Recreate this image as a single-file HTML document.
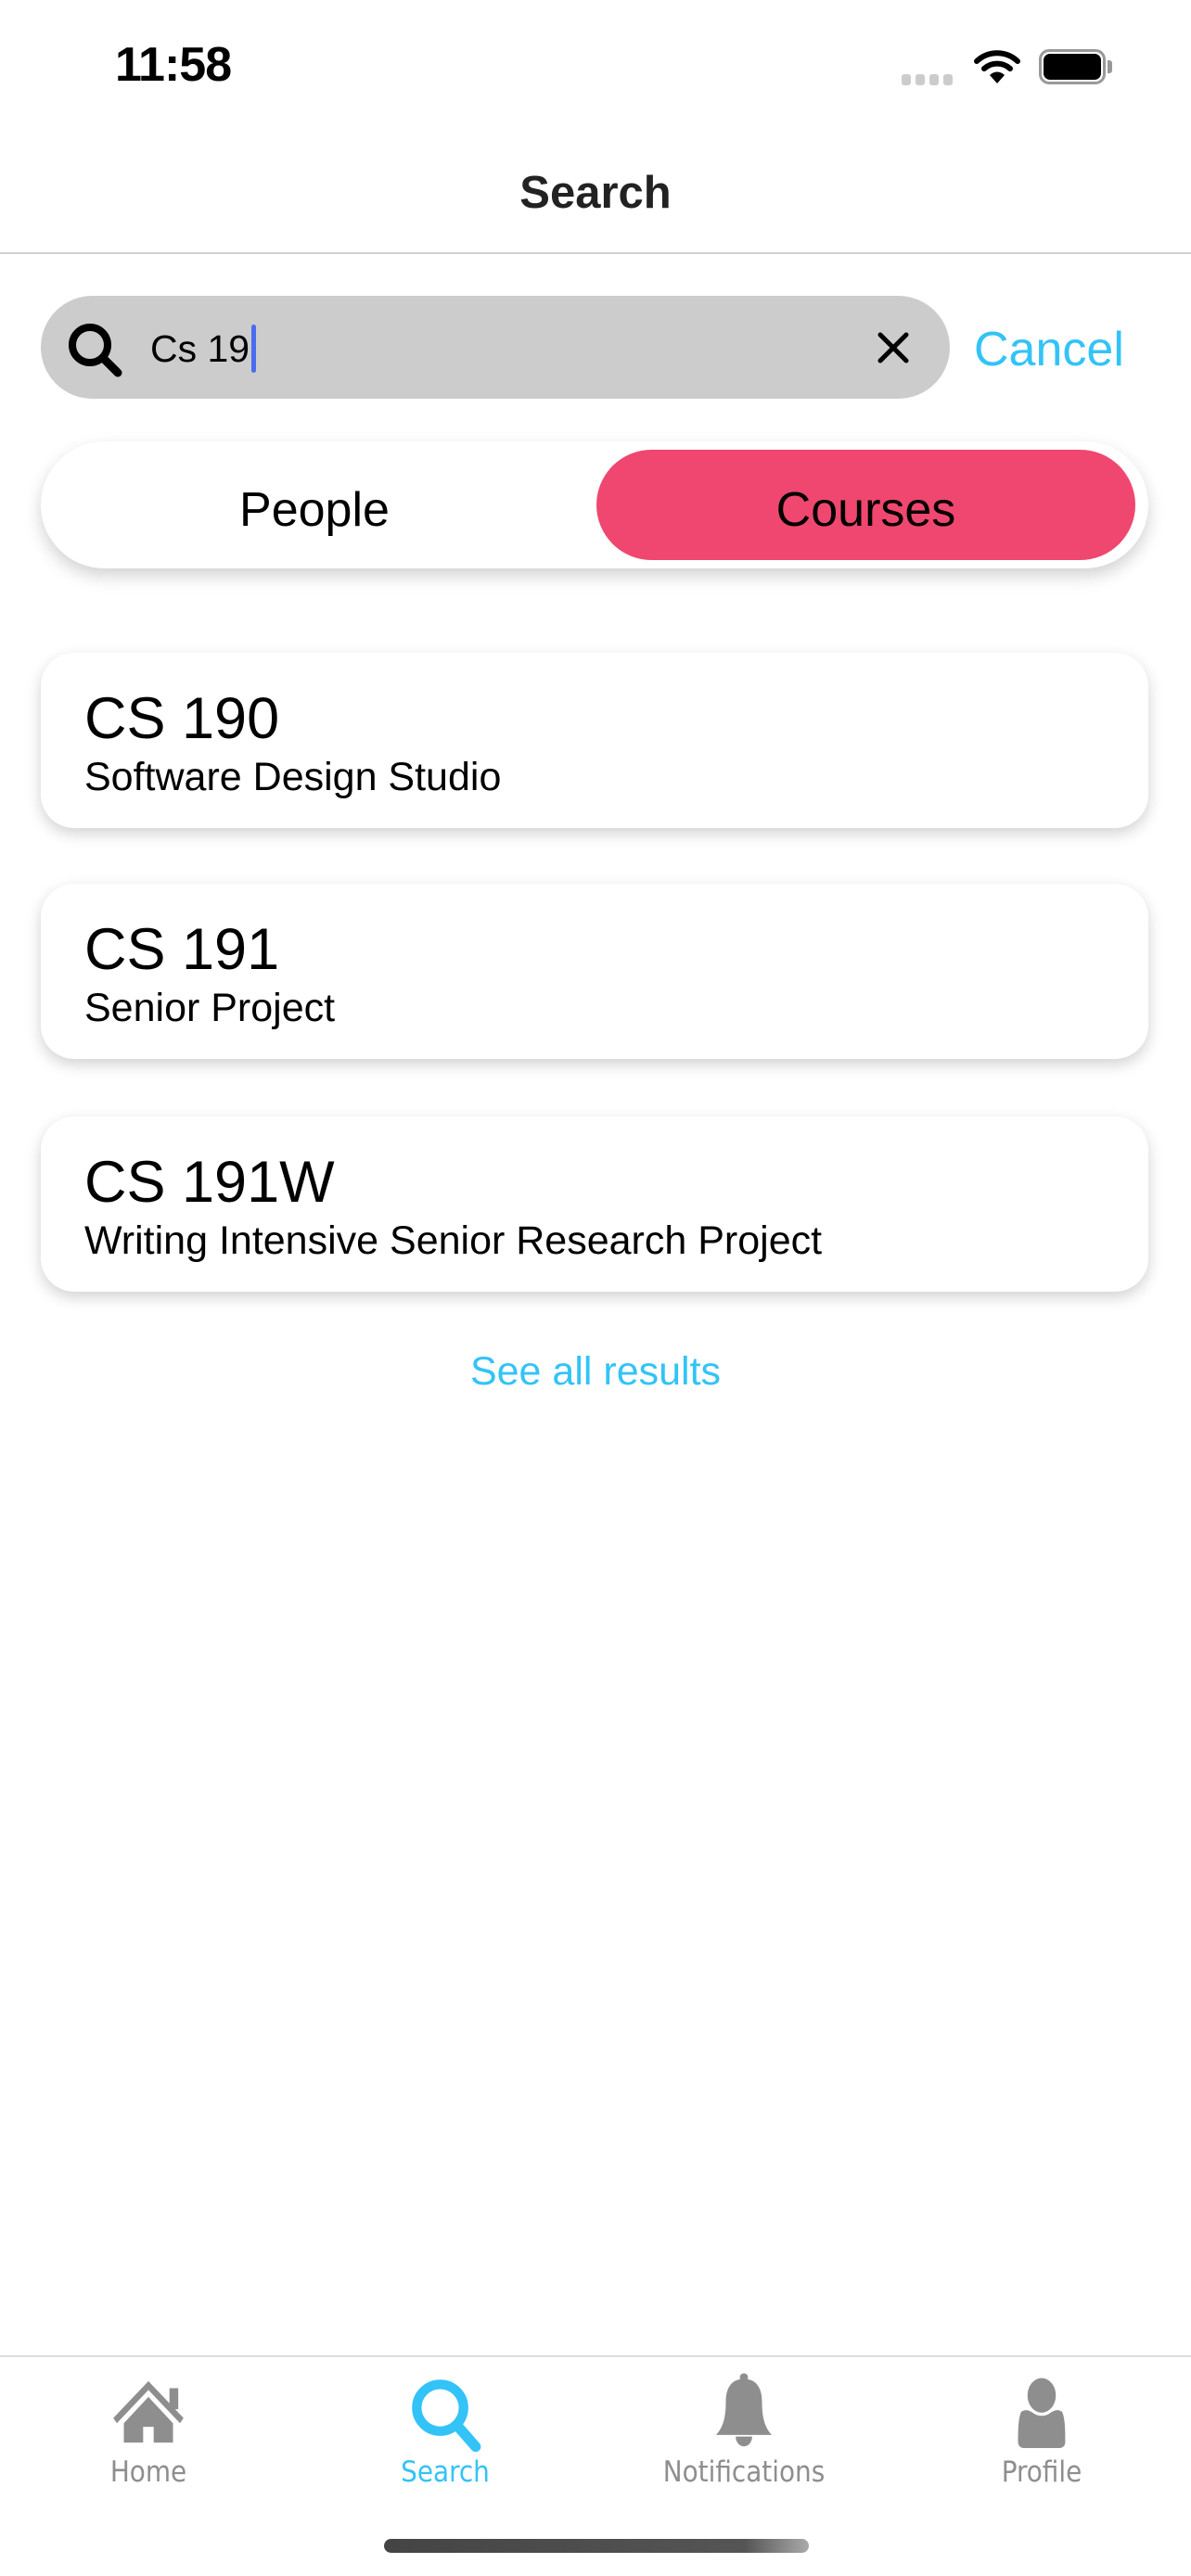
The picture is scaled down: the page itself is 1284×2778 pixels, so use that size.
<!DOCTYPE html>
<html><head><meta charset="utf-8"><style>
*{margin:0;padding:0;box-sizing:border-box}
body{width:1284px;height:2778px;background:#fff;font-family:"Liberation Sans",sans-serif;position:relative;overflow:hidden;color:#000}
.a{position:absolute}
.card{position:absolute;left:44px;width:1194px;height:189px;background:#fff;border-radius:36px;box-shadow:0 6px 16px rgba(0,0,0,0.18)}
.card .t{position:absolute;left:47px;top:34px;font-size:63px;line-height:74px}
.card .s{position:absolute;left:47px;top:110px;font-size:43px;line-height:48px}
.tab{position:absolute;top:2648px;width:240px;text-align:center;font-size:31px;color:#8e8e8e;font-family:"DejaVu Sans Condensed","DejaVu Sans",sans-serif}
</style></head><body>
<div class="a" style="left:124px;top:40px;font-size:52px;font-weight:bold;letter-spacing:-1px">11:58</div>
<div class="a" style="left:972px;top:80px;width:58px;height:12px">
<div class="a" style="left:0;width:10px;height:12px;background:#ccc;border-radius:3px"></div>
<div class="a" style="left:15px;width:10px;height:12px;background:#ccc;border-radius:3px"></div>
<div class="a" style="left:30px;width:10px;height:12px;background:#ccc;border-radius:3px"></div>
<div class="a" style="left:45px;width:10px;height:12px;background:#ccc;border-radius:3px"></div>
</div>
<svg class="a" style="left:1050px;top:52px" width="50" height="40" viewBox="0 0 50 40">
<path d="M3 14 A32 32 0 0 1 47 14" stroke="#000" stroke-width="6" fill="none" stroke-linecap="round"/>
<path d="M11 22 A21 21 0 0 1 39 22" stroke="#000" stroke-width="6" fill="none" stroke-linecap="round"/>
<path d="M25 38 L17 29 A11 11 0 0 1 33 29 Z" fill="#000"/>
</svg>
<div class="a" style="left:1120px;top:53px;width:72px;height:38px;border:3px solid #999;border-radius:11px"></div>
<div class="a" style="left:1125px;top:58px;width:62px;height:28px;background:#000;border-radius:7px"></div>
<div class="a" style="left:1194px;top:65px;width:5px;height:14px;background:#999;border-radius:0 3px 3px 0"></div>

<div class="a" style="left:0;width:1284px;top:180px;text-align:center;font-size:49px;font-weight:bold;color:#222">Search</div>
<div class="a" style="left:0;top:272px;width:1284px;height:2px;background:#d0d0d0"></div>

<div class="a" style="left:44px;top:319px;width:980px;height:111px;background:#cccccc;border-radius:56px"></div>
<svg class="a" style="left:70px;top:345px" width="66" height="66" viewBox="0 0 66 66">
<circle cx="27" cy="27" r="19" stroke="#000" stroke-width="8" fill="none"/>
<path d="M41 41 L57 57" stroke="#000" stroke-width="9" stroke-linecap="round"/>
</svg>
<div class="a" style="left:162px;top:350px;font-size:41px;line-height:52px;white-space:nowrap">Cs 19<span style="display:inline-block;width:5px;height:52px;background:#4a6cf0;border-radius:3px;vertical-align:top;margin-left:2px"></span></div>
<svg class="a" style="left:944px;top:356px" width="38" height="38" viewBox="0 0 38 38">
<path d="M5 5 L33 33 M33 5 L5 33" stroke="#000" stroke-width="5" stroke-linecap="round"/>
</svg>
<div class="a" style="left:1050px;top:347px;font-size:52px;color:#33c3f7">Cancel</div>

<div class="a" style="left:44px;top:476px;width:1194px;height:137px;background:#fff;border-radius:70px;box-shadow:0 8px 18px rgba(0,0,0,0.18)"></div>
<div class="a" style="left:643px;top:485px;width:581px;height:119px;background:#ef476f;border-radius:60px"></div>
<div class="a" style="left:44px;width:590px;top:520px;text-align:center;font-size:52px">People</div>
<div class="a" style="left:643px;width:581px;top:520px;text-align:center;font-size:52px">Courses</div>

<div class="card" style="top:704px"><div class="t">CS 190</div><div class="s">Software Design Studio</div></div>
<div class="card" style="top:953px"><div class="t">CS 191</div><div class="s">Senior Project</div></div>
<div class="card" style="top:1204px"><div class="t">CS 191W</div><div class="s">Writing Intensive Senior Research Project</div></div>

<div class="a" style="left:0;width:1284px;top:1455px;text-align:center;font-size:43px;color:#33c3f7">See all results</div>

<div class="a" style="left:0;top:2540px;width:1284px;height:2px;background:#dcdcdc"></div>
<svg class="a" style="left:120px;top:2566px" width="80" height="70" viewBox="0 0 84 74">
<path d="M42 2 L2 44 L6 50 L42 12 L78 50 L82 44 Z" fill="#8e8e8e"/>
<rect x="66" y="10" width="10" height="24" fill="#8e8e8e"/>
<path d="M42 20 L14 50 L14 72 L36 72 L36 54 L48 54 L48 72 L70 72 L70 50 Z" fill="#8e8e8e"/>
</svg>
<svg class="a" style="left:440px;top:2562px" width="84" height="84" viewBox="0 0 90 90">
<circle cx="37" cy="37" r="27" stroke="#33c3f7" stroke-width="11" fill="none"/>
<path d="M57 58 L78 82" stroke="#33c3f7" stroke-width="12" stroke-linecap="round"/>
</svg>
<svg class="a" style="left:763px;top:2554px" width="78" height="94" viewBox="0 0 88 96">
<circle cx="44" cy="6" r="5" fill="#8e8e8e"/>
<path d="M44 8 C28 8 22 20 22 36 C22 56 18 68 10 76 L78 76 C70 68 66 56 66 36 C66 20 60 8 44 8 Z" fill="#8e8e8e"/>
<path d="M34 78 A10 12 0 0 0 54 78 Z" fill="#8e8e8e"/>
</svg>
<svg class="a" style="left:1089px;top:2562px" width="68" height="78" viewBox="0 0 80 92">
<ellipse cx="40" cy="25" rx="18" ry="22" fill="#8e8e8e"/>
<path d="M14 46 C20 42 24 44 30 48 C36 52 44 52 50 48 C56 44 60 42 66 46 C70 54 70 72 70 84 C70 90 66 92 62 92 L18 92 C14 92 10 90 10 84 C10 72 10 54 14 46 Z" fill="#8e8e8e"/>
</svg>
<div class="tab" style="left:40px">Home</div>
<div class="tab" style="left:360px;color:#33c3f7">Search</div>
<div class="tab" style="left:682px">Notifications</div>
<div class="tab" style="left:1003px">Profile</div>

<div class="a" style="left:414px;top:2738px;width:458px;height:15px;border-radius:8px;background:linear-gradient(90deg,#444,#555 85%,#aaa)"></div>
</body></html>
